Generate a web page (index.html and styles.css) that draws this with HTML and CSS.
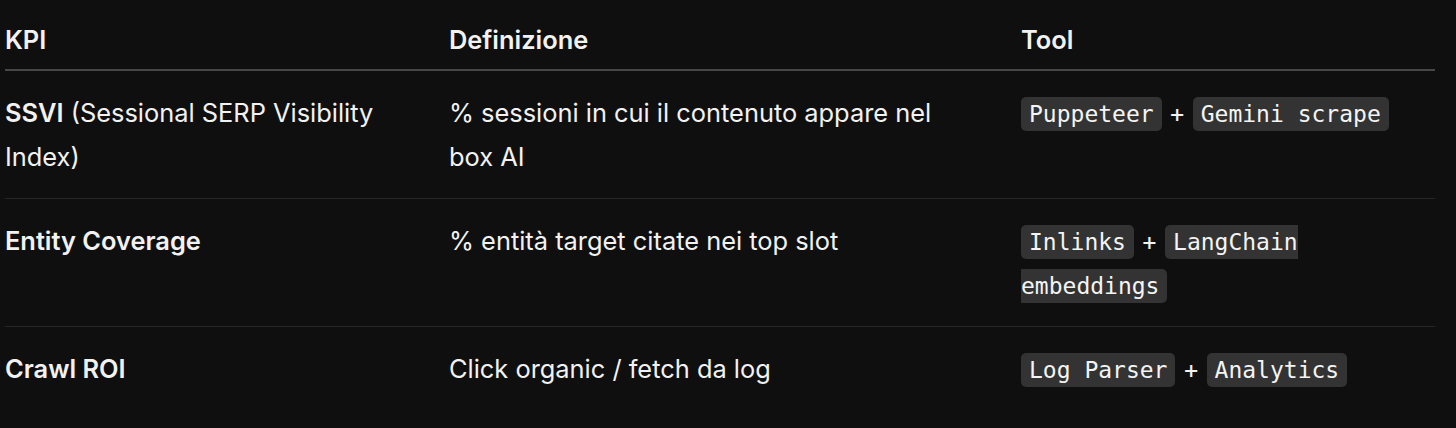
FILE: index.html
```html
<!DOCTYPE html>
<html lang="it">
<head>
<meta charset="utf-8">
<link rel="stylesheet" href="styles.css">
</head>
<body>
<div class="table">
  <div class="row head">
    <div class="cell">KPI</div>
    <div class="cell">Definizione</div>
    <div class="cell">Tool</div>
  </div>
  <div class="row">
    <div class="cell"><strong>SSVI</strong> (Sessional SERP Visibility Index)</div>
    <div class="cell">% sessioni in cui il contenuto appare nel box AI</div>
    <div class="cell"><code>Puppeteer</code> + <code>Gemini scrape</code></div>
  </div>
  <div class="row">
    <div class="cell"><strong>Entity Coverage</strong></div>
    <div class="cell">% entità target citate nei top slot</div>
    <div class="cell"><code>Inlinks</code> + <code>LangChain embeddings</code></div>
  </div>
  <div class="row">
    <div class="cell"><strong>Crawl ROI</strong></div>
    <div class="cell">Click organic / fetch da log</div>
    <div class="cell"><code>Log Parser</code> + <code>Analytics</code></div>
  </div>
</div>
</body>
</html>
```

FILE: styles.css
```css
html, body {
  margin: 0;
  padding: 0;
  background: #0f0f0f;
}
body {
  color: #f2f2f2;
  font-family: Inter, "Noto Sans", sans-serif;
  font-size: 25.4px;
  line-height: 44px;
}
.table {
  margin: 0 21px 0 5px;
  display: flex;
  flex-direction: column;
}
.row {
  display: grid;
  grid-template-columns: 444px 572px 1fr;
  border-top: 1px solid #262626;
}
.row.head {
  border-top: none;
  border-bottom: 2px solid #474747;
  font-weight: 600;
}
.row.head + .row {
  border-top: none;
}
.cell {
  padding: 20px 52px 19px 0;
}
.cell:last-child {
  padding-right: 0;
}
.head .cell {
  padding: 18px 0 7px 0;
}
strong {
  font-weight: 600;
}
code {
  font-family: "DejaVu Sans Mono", monospace;
  font-size: 23px;
  line-height: 1;
  background: #333333;
  border-radius: 5px;
  padding: 4px 8px;
  color: #f4f4f4;
}
```
